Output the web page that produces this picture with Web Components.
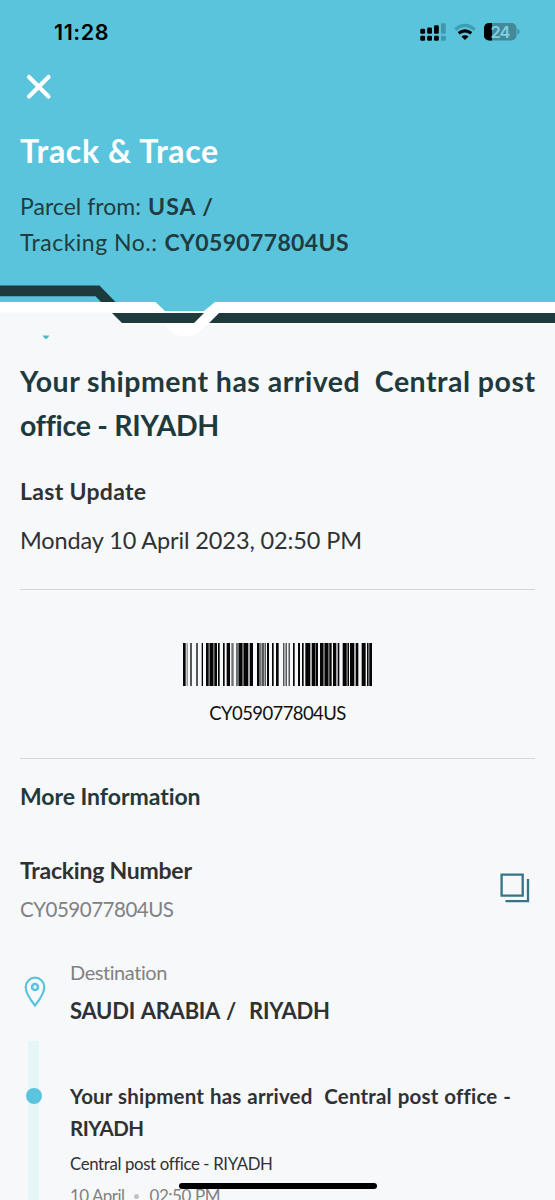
<!DOCTYPE html>
<html lang="en"><head><meta charset="utf-8"><title>Track &amp; Trace</title>
<style>
html,body{margin:0;height:1200px;overflow:hidden;background:#f7f8fa}
body{font-family:Lato,"Open Sans",sans-serif}
</style></head><body>
<track-app></track-app>
<script>
const define=(name,html,setup)=>customElements.define(name,class extends HTMLElement{
  constructor(){super();this.attachShadow({mode:'open'}).innerHTML=html;}
  connectedCallback(){if(setup)setup(this,this.shadowRoot);}
});

// One text line: h = line height, s = font size, w = run width, c = colour, b = weight, ws = word spacing.
define('text-line',`<style>:host{display:block;white-space:pre;flex:none}span{display:inline-block}</style><span><slot></slot></span>`,(el,root)=>{
  const a=n=>el.getAttribute(n);
  if(a('h')){el.style.height=el.style.lineHeight=a('h')+'px';}
  el.style.fontSize=a('s')+'px';
  if(a('c'))el.style.color=a('c');
  if(a('b'))el.style.fontWeight=a('b');
  if(a('ws'))el.style.wordSpacing=a('ws')+'px';
  const span=root.querySelector('span'),n=el.textContent.length;
  const natural=span.getBoundingClientRect().width;
  span.style.letterSpacing=((+a('w')-natural)/(n-1))+'px';
});

define('status-bar',`<style>
:host{display:flex;height:63px;padding:0 35px 0 54px;align-items:center;justify-content:space-between;box-sizing:border-box;color:#000}
text-line{font-family:Inter,sans-serif}svg{display:block}</style>
<text-line h="62" s="21.5" w="54.500" b="600">11:28</text-line>
<svg width="101" height="24" viewBox="419 19.5 101 24">
 <g fill="#000"><rect x="420.3" y="28.3" width="4.8" height="5" rx="1.2"/><rect x="427.2" y="27" width="4.8" height="6.3" rx="1.2"/><rect x="434" y="24.8" width="4.8" height="8.5" rx="1.2"/>
 <rect x="420.3" y="35.2" width="4.8" height="5" rx="1.2"/><rect x="427.2" y="35.2" width="4.8" height="5" rx="1.2"/><rect x="434" y="35.2" width="4.8" height="5" rx="1.2"/></g>
 <g fill="#3f98ab"><rect x="441" y="22.8" width="4.8" height="10.5" rx="1.2"/><rect x="441" y="35.2" width="4.8" height="5" rx="1.2"/></g>
 <path d="M455.2 28.9Q465 20.9 474.8 28.9" fill="none" stroke="#3f9db3" stroke-width="3.2"/>
 <path d="M458.7 32.8Q465 27.8 471.3 32.8" fill="none" stroke="#000" stroke-width="3.2"/>
 <path d="M461.4 36Q465 33.4 468.6 36L465 39.6Z"/>
 <rect x="484" y="22.5" width="32.5" height="17.5" rx="5" fill="#42899a"/><path d="M492 22.5h-3a5 5 0 0 0-5 5v7.500a5 5 0 0 0 5 5h3z"/>
 <path d="M517.5 28.300q2 .8 2 3t-2 3z" fill="#42899a"/>
 <text x="490.500" y="37.200" font-family="Inter" font-size="16.500" font-weight="600" fill="#7fcfe2" textLength="20">24</text>
</svg>`);

define('page-header',`<style>
:host{display:block;height:285px;background:#5ac4dd;color:#1f3c40}
.close{display:block;margin:11px 0 0 26px}
.t{padding:0 20px}.row{display:flex;gap:6px}</style>
<status-bar></status-bar>
<svg class="close" width="26" height="26" viewBox="0 0 26 26"><path d="M3 3L22.500 22.500M22.500 3L3 22.500" stroke="#fff" stroke-width="4.200" stroke-linecap="round"/></svg>
<div class="t">
<text-line style="margin-top:31px" h="40" s="32" w="198" c="#fff" b="700">Track &amp; Trace</text-line>
<div class="row" style="margin-top:17px"><text-line h="36" s="23" w="121">Parcel from:</text-line><text-line style="margin-left:1px" h="36" s="23" w="65" b="700">USA /</text-line></div>
<div class="row"><text-line h="36" s="23" w="137">Tracking No.:</text-line><text-line style="margin-left:1px" h="36" s="23" w="184" b="700">CY059077804US</text-line></div>
</div>`);

define('header-edge',`<style>:host{display:block;height:57px}svg{display:block}</style>
<svg width="555" height="57" viewBox="0 285 555 57">
<path d="M0 285H555V312H0Z" fill="#5ac4dd"/>
<path d="M0 285.500H99.500L116.500 303H102L95.500 296.300H0Z" fill="#1f3a3d"/>
<path d="M0 302H155.500L165 311H204L215 302H555V313H0Z" fill="#fff"/>
<path d="M0 312.500H555V342H0Z" fill="#f7f8fa"/>
<path d="M112 311H555V324.500H207L200 331Q195 336 187 336H181Q174 335 170 331L164 324.500H122Z" fill="#fff"/>
<path d="M112 313H204L194 323H122ZM219 313H555V323H209Z" fill="#1f3a3d"/>
<path d="M42.500 335.500H49.500L47 338.700H45Z" fill="#4eb5d0"/>
</svg>`);

define('bar-code',`<style>:host{display:flex;flex-direction:column;align-items:center;color:#111}svg{display:block}</style>
<svg width="189" height="43" viewBox="39 0 567 129" preserveAspectRatio="none"></svg><text-line style="margin-top:15px" h="24" s="18.500" w="137">CY059077804US</text-line>`,(el,root)=>{
  const bars=[39,47,61,65,79,83,95,99,108,116,120,129,133,141,144,149,159,164,170,180,207,217,221,235,239,249,261,267,277,281,284,287,291,297,306,311,318,326,340,343,347,350,356,359,369,374,384,390,396,401,406,421,425,435,438,444,450,460,464,474,478,485,489,499,503,508,518,530,534,537,540,553,557,565,575,587,591,594,598,606];
  const gray=[50,53,116,120,129,133,184,191,198,207,217,221,267,275,435,438,460,464,474,478,530,534,594,598];
  const path=(l,c)=>{let d='';for(let i=0;i<l.length;i+=2)d+=`M${l[i]} 0H${l[i+1]}V129H${l[i]}Z`;return `<path d="${d}" fill="${c}"/>`;};
  root.querySelector('svg').innerHTML=path(gray,'#707173')+path(bars,'#060607');
});

define('shipment-summary',`<style>:host{display:block;padding:0 20px;color:#303133}
hr{border:0;height:1px;background:#d5d7da;margin:0}</style>
<text-line style="margin-top:17px" h="44" s="28.500" w="515" c="#1f3a3d" b="700">Your shipment has arrived  Central post</text-line>
<text-line h="45" s="28.500" w="198" c="#1f3a3d" b="700">office - RIYADH</text-line>
<text-line style="margin-top:27px" h="32" s="23" w="126" b="700">Last Update</text-line>
<text-line style="margin-top:17px" h="32" s="23.500" w="342">Monday 10 April 2023, 02:50 PM</text-line>
<hr style="margin-top:33px"><bar-code style="margin-top:53px"></bar-code><hr style="margin-top:33px">
<text-line style="margin-top:21px" h="32" s="23" w="181" c="#1f3a3d" b="700">More Information</text-line>`);

define('tracking-number',`<style>:host{display:flex;justify-content:space-between;padding:42px 25px 0 20px;color:#303133}svg{margin-top:19px;flex:none}</style>
<div><text-line h="32" s="23" w="172" b="700">Tracking Number</text-line><text-line style="margin-top:8px" h="30" s="20.500" w="154" c="#808184">CY059077804US</text-line></div>
<svg width="30" height="30" viewBox="0 0 30 30" fill="none" stroke="#347486" stroke-width="2.300"><path d="M1.600 1.600H22.700V22.700H1.600ZM28 6V28.200H5.500"/></svg>`);

define('destination-row',`<style>:host{display:flex;padding:33px 0 0 24px;color:#303133}svg{margin:19px 24px 0 0;flex:none}</style>
<svg width="22" height="32" viewBox="0 0 22 32" fill="none" stroke="#5ac4dd" stroke-width="2.200"><path d="M11 29.500Q1.700 18 1.700 11A9.300 9.300 0 0 1 20.300 11Q20.300 18 11 29.500Z"/><circle cx="11" cy="11" r="3" stroke-width="2.600"/></svg>
<div><text-line h="30" s="20" w="98" c="#808184">Destination</text-line><text-line style="margin-top:9px" h="30" s="22" w="260" b="700" ws="1.500">SAUDI ARABIA /  RIYADH</text-line></div>`);

define('timeline-event',`<style>:host{display:flex;margin-top:15px;color:#303133;height:159px;overflow:hidden}
.rail{width:11px;margin:0 31px 0 28px;background:#e5f6f9;display:flex;justify-content:center;flex:none}
.dot{width:16px;height:16px;border-radius:50%;background:#5ac4dd;margin-top:47px;flex:none}
.when{display:flex;align-items:center;color:#808184}.sep{width:5px;height:5px;border-radius:50%;background:#c2c3c6;margin:0 10px}</style>
<div class="rail"><div class="dot"></div></div>
<div><text-line style="margin-top:40px" h="31" s="20.500" w="440" b="700" ws=".700">Your shipment has arrived  Central post office -</text-line>
<text-line h="33" s="20.500" w="74" b="700">RIYADH</text-line>
<text-line style="margin-top:7px" h="24" s="16.800" w="202">Central post office - RIYADH</text-line>
<div class="when" style="margin-top:8px"><text-line h="24" s="17" w="55">10 April</text-line><i class="sep"></i><text-line h="24" s="17" w="71">02:50 PM</text-line></div></div>`);

define('track-app',`<style>:host{display:block;position:relative;width:555px;height:1200px;overflow:hidden;background:#f7f8fa}
.home{position:absolute;left:179px;top:1183px;width:198px;height:6px;border-radius:3px;background:#000}</style>
<page-header></page-header><header-edge></header-edge><shipment-summary></shipment-summary>
<tracking-number></tracking-number><destination-row></destination-row><timeline-event></timeline-event><div class="home"></div>`);
</script></body></html>
